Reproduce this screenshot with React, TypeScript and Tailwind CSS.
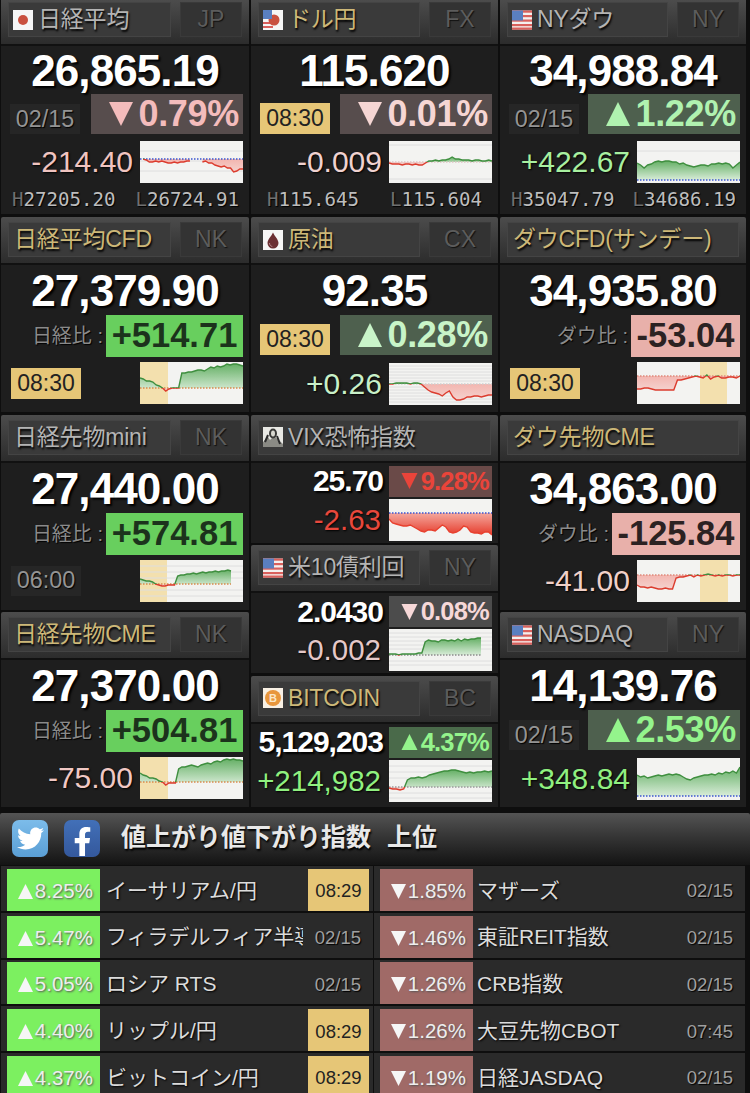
import { useId, type ReactNode } from "react";
import { FaTwitter, FaFacebookF } from "react-icons/fa";

const sans = "font-['Liberation_Sans','Noto_Sans_CJK_JP',sans-serif]";

function Tri({ up, color, w, h }: { up: boolean; color: string; w: number; h: number }) {
  return (
    <svg width={w} height={h} viewBox="0 0 10 10" className="shrink-0">
      <polygon points={up ? "5,0 10,10 0,10" : "0,0 10,0 5,10"} fill={color} />
    </svg>
  );
}

/* flags and small square icons */
function UsFlag() {
  return (
    <svg width="20" height="20" viewBox="0 0 20 20" className="shrink-0">
      <rect y="0.5" width="20" height="19" fill="#f4f0ee" />
      {[0.5, 5, 9.5, 14, 17.5].map((y) => (
        <rect key={y} y={y} width="20" height="2.2" fill="#d9605c" />
      ))}
      <rect y="0.5" width="11" height="10" fill="#5a7fc0" />
    </svg>
  );
}

function JpFlag() {
  return (
    <svg width="20" height="20" viewBox="0 0 20 20" className="shrink-0">
      <rect width="20" height="20" fill="#f6f6f6" />
      <circle cx="10" cy="10" r="5" fill="#c9503f" />
    </svg>
  );
}

function UsdJpy() {
  return (
    <svg width="20" height="20" viewBox="0 0 20 20" className="shrink-0">
      <rect width="20" height="20" fill="#f6f6f6" />
      <rect x="0" y="12" width="10" height="2" fill="#d9605c" />
      <rect x="0" y="16" width="10" height="2" fill="#d9605c" />
      <circle cx="11" cy="10" r="5.5" fill="#c9503f" />
      <rect x="0" y="0" width="9" height="9" fill="#5a7fc0" />
    </svg>
  );
}

function OilIcon() {
  return (
    <svg width="20" height="20" viewBox="0 0 20 20" className="shrink-0">
      <rect width="20" height="20" fill="#f6f6f6" />
      <path d="M10 2.5C8.5 6 4.5 9.5 4.5 13a5.5 5.5 0 0 0 11 0C15.500 9.500 11.500 6 10 2.500Z" fill="#6b2f33" />
      <path d="M6.500 13c0 2 1.200 3.200 2.800 3.500" stroke="#b58a8c" strokeWidth="1" fill="none" />
    </svg>
  );
}

function VixIcon() {
  return (
    <svg width="20" height="20" viewBox="0 0 20 20" className="shrink-0">
      <rect width="20" height="20" fill="#e8e8e4" />
      <path d="M0 20V15L5 10 7 13 11 9 20 17V20Z" fill="#8a8a84" />
      <ellipse cx="10" cy="6.500" rx="4" ry="5" fill="#3a3a38" />
      <ellipse cx="10" cy="6.500" rx="2" ry="3" fill="#d8d8d0" />
      <path d="M5 8L2 15M14 9L17 17" stroke="#2a2a2a" strokeWidth="2" />
    </svg>
  );
}

function BtcIcon() {
  return (
    <svg width="20" height="20" viewBox="0 0 20 20" className="shrink-0">
      <rect width="20" height="20" fill="#f8f0e4" />
      <circle cx="10" cy="10" r="8" fill="#e8963c" />
      <text x="10" y="14" textAnchor="middle" fontSize="11" fontWeight="700" fill="#fbe6c8" fontFamily="Liberation Sans">
        B
      </text>
    </svg>
  );
}

/* header bar above each quote */
function Header({ name, tag, gold, icon, first }: { name: string; tag?: string; gold?: boolean; icon?: ReactNode; first?: boolean }) {
  return (
    <div
      className={`flex gap-[9px] border-b-2 border-[#111] bg-gradient-to-b from-[#4c4c4c] to-[#2c2c2c] px-[7px] ${
        first ? "h-[46px] pt-[2px]" : "h-[48px] rounded-t-[2px] pt-[5px]"
      }`}
    >
      <div className={`flex h-[35px] min-w-0 flex-1 items-center border border-[#444] bg-[#3a3a3a] ${icon ? "pl-[4px]" : "pl-[5px]"}`}>
        {icon && <span className="mr-[5px] flex">{icon}</span>}
        <span
          className={`whitespace-nowrap text-[23px] tracking-[-0.2px] [text-shadow:1px_2px_2px_#000] ${
            gold ? "text-[#cdb878]" : "text-[#b4b4b4]"
          }`}
        >
          {name}
        </span>
      </div>
      {tag && (
        <div className="flex h-[35px] w-[62px] shrink-0 items-center justify-center border border-[#3a3a3a] bg-[#333] text-[23px] text-[#5c5c5c] [text-shadow:1px_1px_1px_#111]">
          {tag}
        </div>
      )}
    </div>
  );
}

function BigValue({ children }: { children: ReactNode }) {
  return (
    <div className="h-[44px] text-center text-[44px] font-bold leading-[44px] tracking-[-0.9px] text-white [text-shadow:2px_2px_2px_#000]">
      {children}
    </div>
  );
}

function PctBox({ up, value, box, text }: { up: boolean; value: string; box: string; text: string }) {
  const fill = text.slice(6, 13);
  return (
    <div className={`flex h-[40px] w-[152px] items-center justify-end gap-[5px] pr-[4px] text-[36px] font-bold tracking-[-0.3px] ${box} ${text}`}>
      <Tri up={up} color={fill} w={24} h={26} />
      {value}
    </div>
  );
}

function SmallPct({ up, value, box, text }: { up: boolean; value: string; box: string; text: string }) {
  const fill = text.slice(6, 13);
  return (
    <div className={`flex h-[31px] w-[103px] items-center justify-end gap-[3px] pr-[3px] text-[25.5px] font-bold tracking-[-0.8px] ${box} ${text}`}>
      <Tri up={up} color={fill} w={17} h={16} />
      {value}
    </div>
  );
}

function DateBox({ children }: { children: ReactNode }) {
  return (
    <div className="flex h-[30px] w-[70px] items-center justify-center bg-[#262626] text-[23.300px] text-[#949494] [text-shadow:1px_1px_1px_#000]">
      {children}
    </div>
  );
}

function TimeBox({ children, className = "" }: { children: ReactNode; className?: string }) {
  return <div className={`flex h-[31px] w-[70px] items-center justify-center bg-[#e6c677] text-[23px] text-[#222] ${className}`}>{children}</div>;
}

function Change({ children, className }: { children: ReactNode; className: string }) {
  return <div className={`mr-[7px] whitespace-nowrap text-[30px] leading-none [text-shadow:1px_1px_2px_#000] ${className}`}>{children}</div>;
}

function DiffRow({ label, value, up, width }: { label: string; value: string; up: boolean; width: string }) {
  return (
    <div className="mt-[2px] flex items-center justify-end gap-[3px] pr-[6px]">
      <span className="text-[20px] text-[#8a8a8a] [text-shadow:1px_1px_1px_#000]">{label} :</span>
      <div
        className={`flex h-[42px] items-center justify-center text-[34.500px] font-bold ${width} ${
          up ? "bg-[#68cf5e] text-[#1c331c]" : "bg-[#e8b0aa] text-[#2c2222]"
        }`}
      >
        {value}
      </div>
    </div>
  );
}

/* tiny intraday chart: the line is green above the base line and red below it */
type SparkProps = {
  ys: (number | null)[];
  base: number;
  baseColor?: string;
  zone?: [number, number];
  end?: number;
  grid?: number[];
  redFill?: [string, string];
  lineRed?: string;
};

function Spark({ ys, base, baseColor = "#3b55d0", zone, end = 103, grid = [10, 20, 30], redFill = ["#f3b4ae", "#f4d2ce"], lineRed = "#dc3c2e" }: SparkProps) {
  const id = useId().replace(/[^a-zA-Z0-9]/g, "");
  const step = end / (ys.length - 1);
  const segs: [number, number][][] = [];
  let cur: [number, number][] = [];
  ys.forEach((y, i) => {
    if (y === null) {
      if (cur.length) segs.push(cur);
      cur = [];
    } else cur.push([i * step, y]);
  });
  if (cur.length) segs.push(cur);
  const line = segs.map((s) => "M" + s.map((p) => p.join(" ")).join("L")).join("");
  const area = segs
    .map((s) => `M${s[0][0]} ${base}L` + s.map((p) => p.join(" ")).join("L") + `L${s[s.length - 1][0]} ${base}Z`)
    .join("");
  return (
    <svg width="103" height="42" viewBox="0 0 103 42" className="block shrink-0">
      <rect width="103" height="42" fill="#f3f3f1" />
      {zone && <rect x={zone[0]} width={zone[1] - zone[0]} height="42" fill="#f3e0ae" />}
      {grid.map((g) => (
        <line key={g} x1="0" x2="103" y1={g} y2={g} stroke="#dedede" strokeWidth="1" />
      ))}
      <defs>
        <clipPath id={id + "a"}>
          <rect width="103" height={base} />
        </clipPath>
        <clipPath id={id + "b"}>
          <rect y={base} width="103" height={42 - base} />
        </clipPath>
        <linearGradient id={id + "g"} x1="0" y1="0" x2="0" y2="1">
          <stop offset="0" stopColor="#66b066" />
          <stop offset="1" stopColor="#d8ecd8" />
        </linearGradient>
        <linearGradient id={id + "r"} x1="0" y1="0" x2="0" y2="1">
          <stop offset="0" stopColor={redFill[0]} />
          <stop offset="1" stopColor={redFill[1]} />
        </linearGradient>
      </defs>
      <path d={area} fill={`url(#${id}g)`} clipPath={`url(#${id}a)`} />
      <path d={area} fill={`url(#${id}r)`} clipPath={`url(#${id}b)`} />
      <line x1="0" x2={end} y1={base} y2={base} stroke={baseColor} strokeWidth="1.500" strokeDasharray="1.500 1.500" />
      <path d={line} fill="none" stroke="#3f8f3f" strokeWidth="1.400" clipPath={`url(#${id}a)`} />
      <path d={line} fill="none" stroke={lineRed} strokeWidth="1.400" clipPath={`url(#${id}b)`} />
    </svg>
  );
}

/* chart series, hand read from the picture */
const nikkei = [null, 18, 19, 21, 21, 20, 21, 20, 21, 22, 22, 21, 22, 21, 21, 20, 20, null, null, null, 21, 20, 22, 22, 24, 25, 26, 25, 27, 27, 31, 30, 28, 28];
const usdjpy = [22, 23, 23, 23, 24, 23, 23, 24, 23, 24, 24, 22, 20, 20, 19, 20, 19, 19, 18, 16, 18, 18, 19, 19, 19, 20, 19, 19, 20, 20, 19, 20];
const nydow = [22, 24, 27, 24, 23, 21, 20, 21, 20, 20, 21, 21, 23, 22, 24, 25, 26, 25, 24, 24, 25, 23, 23, 22, 23, 22, 23, 27, 24, 21];
const cfd = [16, 17, 19, 19, 20, 23, 24, 26, 29, 27, 26, 26, 26, 11, 11, 10, 10, 9, 8, 8, 9, 7, 5, 6, 4, 5, 4, 2, 3, 2, 2, 3, 4];
const oil = [21, 21, 20, 20, 20, 20, 21, 20, 20, 21, 24, 27, 29, 30, 31, 33, 30, 28, 34, 37, 37, 36, 34, 34, 33, 33, 34, 33, 32, 32];
const dowcfd = [27, 27, 26, 26, 27, 28, 28, 28, 28, 28, 28, 18, 18, 17, 16, 15, 14, 15, 16, 13, 17, 15, 14, 16, 16, 15, 15, 16, 14];
const mini = [19, 20, 21, 21, 22, 24, 25, 26, 26, 25, 25, 25, 16, 15, 15, 14, 14, 13, 14, 13, 12, 13, 12, 12, 11, 12, 11, 11, 10, 11];
const dowcme = [25, 27, 27, 28, 27, 28, 29, 29, 28, 29, 29, 18, 17, 17, 16, 15, 17, 15, 16, 15, 14, 15, 16, 15, 16, 15, 15, 16, 15, 15];
const vix = [20, 24, 25, 26, 27, 27, 26, 28, 30, 32, 33, 31, 31, 32, 29, 26, 28, 33, 34, 33, 31, 27, 28, 33, 34, 34, 35, 33, 33, 36];
const tnx = [25, 25, 25, 26, 25, 25, 25, 25, 25, 24, 24, 13, 11, 12, 12, 13, 11, 11, 12, 11, 12, 10, 12, 10, 11, 10, 10, 9, 9];
const btc = [28, 29, 29, 30, 29, 20, 18, 18, 17, 18, 17, 15, 14, 13, 12, 11, 11, 10, 10, 11, 12, 13, 12, 13, 12, 12, 11, 12, 11];
const cme = [16, 18, 19, 21, 21, 22, 24, 25, 28, 26, 26, 26, 12, 10, 10, 9, 8, 9, 10, 8, 7, 6, 7, 5, 4, 5, 3, 2, 3, 2, 3, 3, 4];
const nasdaq = [17, 19, 18, 20, 19, 18, 17, 18, 17, 16, 17, 16, 17, 19, 21, 22, 20, 19, 18, 17, 17, 16, 17, 15, 16, 14, 15, 13, 15, 9];

/* quote body with date and high/low */
function FullBody({ value, left, pct, change, chart, high, low, hlPad = "pl-[11px] pr-[10px]" }: { value: string; left: ReactNode; pct: ReactNode; change: ReactNode; chart: ReactNode; high: string; low: string; hlPad?: string }) {
  return (
    <div className="h-[168px] bg-[#1e1e1e] pt-[3px]">
      <BigValue>{value}</BigValue>
      <div className="mt-[1px] flex items-end justify-between pl-[9px] pr-[6px]">
        {left}
        {pct}
      </div>
      <div className="mt-[7px] flex items-center justify-end pr-[6px]">
        {change}
        {chart}
      </div>
      <div className={`mt-[6px] flex justify-between font-['DejaVu_Sans_Mono',monospace] text-[19.100px] leading-[22px] text-[#bdbdbd] [text-shadow:1px_1px_1px_#000] ${hlPad}`}>
        <span>
          <span className="text-[#707070]">H</span>
          {high}
        </span>
        <span>
          <span className="text-[#707070]">L</span>
          {low}
        </span>
      </div>
    </div>
  );
}

function DiffBody({ value, label, diff, up, width, left, chart }: { value: string; label: string; diff: string; up: boolean; width: string; left: ReactNode; chart: ReactNode }) {
  return (
    <div className="h-[147px] bg-[#1e1e1e] pt-[4px]">
      <BigValue>{value}</BigValue>
      <DiffRow label={label} value={diff} up={up} width={width} />
      <div className="mt-[5px] flex items-center justify-end pl-[10px] pr-[6px]">
        {left}
        {chart}
      </div>
    </div>
  );
}

function PctBody({ value, left, pct, change, chart }: { value: string; left: ReactNode; pct: ReactNode; change: ReactNode; chart: ReactNode }) {
  return (
    <div className="h-[147px] bg-[#1e1e1e] pt-[4px]">
      <BigValue>{value}</BigValue>
      <div className="mt-[2px] flex items-end justify-between pl-[9px] pr-[6px]">
        {left}
        {pct}
      </div>
      <div className="mt-[8px] flex items-center justify-end pr-[6px]">
        {change}
        {chart}
      </div>
    </div>
  );
}

function CompactBody({ value, pct, change, changeClass, chart, tall }: { value: string; pct: ReactNode; change: string; changeClass: string; chart: ReactNode; tall?: boolean }) {
  return (
    <div className={`bg-[#1e1e1e] pr-[6px] pt-[3px] ${tall ? "h-[83px]" : "h-[80px]"}`}>
      <div className="flex items-center justify-end gap-[6px]">
        <span className="text-[30px] font-bold leading-none tracking-[-1px] text-white [text-shadow:2px_2px_2px_#000]">{value}</span>
        {pct}
      </div>
      <div className="mt-[2px] flex items-center justify-end">
        <span className={`mr-[8px] whitespace-nowrap text-[29.500px] leading-none [text-shadow:1px_1px_2px_#000] ${changeClass}`}>{change}</span>
        {chart}
      </div>
    </div>
  );
}

const downBox = "bg-[#574d4d]";
const greenBox = "bg-[#4e604e]";

/* rows of the ranking list */
const rising = [
  { pct: "8.25%", name: "イーサリアム/円", time: "08:29", hot: true },
  { pct: "5.47%", name: "フィラデルフィア半導体", time: "02/15", hot: false },
  { pct: "5.05%", name: "ロシア RTS", time: "02/15", hot: false },
  { pct: "4.40%", name: "リップル/円", time: "08:29", hot: true },
  { pct: "4.37%", name: "ビットコイン/円", time: "08:29", hot: true },
];

const falling = [
  { pct: "1.85%", name: "マザーズ", time: "02/15" },
  { pct: "1.46%", name: "東証REIT指数", time: "02/15" },
  { pct: "1.26%", name: "CRB指数", time: "02/15" },
  { pct: "1.26%", name: "大豆先物CBOT", time: "07:45" },
  { pct: "1.19%", name: "日経JASDAQ", time: "02/15" },
];

function RankRow({ up, pct, name, time, hot }: { up: boolean; pct: string; name: string; time: string; hot?: boolean }) {
  return (
    <div className="flex h-[44.750px] shrink-0 items-end bg-[#2a2a2a] pl-[6px] pr-[4px]">
      <div
        className={`flex h-[42px] w-[93px] shrink-0 items-center justify-end gap-[2px] pr-[7px] pt-[3px] text-[20.500px] text-[#eee] [text-shadow:1px_1px_2px_#555] ${
          up ? "bg-[#7cf060]" : "bg-[#a06a67]"
        }`}
      >
        <Tri up={up} color="#f6f6f6" w={15} h={15} />
        {pct}
      </div>
      <div
        className={`flex h-[42px] min-w-0 flex-1 items-center overflow-hidden whitespace-nowrap pt-[1px] text-[21px] text-[#dcdcdc] [text-shadow:1px_1px_2px_#000] ${
          up ? "ml-[6px]" : "ml-[4px]"
        }`}
      >
        {name}
      </div>
      {hot ? (
        <div className="ml-[5px] flex h-[42px] w-[61px] shrink-0 items-center justify-center bg-[#e6c677] pt-[3px] text-[18.500px] text-[#222]">{time}</div>
      ) : (
        <div className="ml-[5px] flex h-[42px] w-[61px] shrink-0 items-center justify-end pr-[8px] pt-[3px] text-[18.500px] text-[#a0a0a0] [text-shadow:1px_1px_1px_#000]">{time}</div>
      )}
    </div>
  );
}

export default function App() {
  return (
    <div className={`h-[1093px] w-[750px] overflow-hidden bg-[#0e0e0e] ${sans}`}>
      {/* quote panels */}
      <div className="grid h-[807px] grid-cols-[248px_247px_246px] gap-x-[2px] pl-[1px]">
        <div className="flex flex-col gap-[2.500px]">
          <div className="pb-[0.500px]">
            <Header first name="日経平均" tag="JP" icon={<JpFlag />} />
            <FullBody
              value="26,865.19"
              left={<DateBox>02/15</DateBox>}
              pct={<PctBox up={false} value="0.79%" box={downBox} text="text-[#f4bcbc]" />}
              change={<Change className="text-[#f0c4c0]">-214.40</Change>}
              chart={<Spark ys={nikkei} base={18} />}
              high="27205.20"
              low="26724.91"
            />
          </div>
          <div>
            <Header gold name="日経平均CFD" tag="NK" />
            <DiffBody
              value="27,379.90"
              label="日経比"
              diff="+514.71"
              up
              width="w-[137px]"
              left={<TimeBox className="mr-auto">08:30</TimeBox>}
              chart={<Spark ys={cfd} base={26} baseColor="#d88a4c" zone={[0, 28]} grid={[]} />}
            />
          </div>
          <div>
            <Header name="日経先物mini" tag="NK" />
            <DiffBody
              value="27,440.00"
              label="日経比"
              diff="+574.81"
              up
              width="w-[137px]"
              left={
                <div className="mr-auto">
                  <DateBox>06:00</DateBox>
                </div>
              }
              chart={<Spark ys={mini} base={24} baseColor="#d88a4c" zone={[0, 27]} end={91} grid={[6, 12, 18, 30, 36]} />}
            />
          </div>
          <div>
            <Header gold name="日経先物CME" tag="NK" />
            <DiffBody
              value="27,370.00"
              label="日経比"
              diff="+504.81"
              up
              width="w-[137px]"
              left={<Change className="text-[#f0c8c4]">-75.00</Change>}
              chart={<Spark ys={cme} base={25} baseColor="#d88a4c" zone={[0, 28]} grid={[]} />}
            />
          </div>
        </div>

        <div className="flex flex-col gap-[2.500px]">
          <div className="pb-[0.500px]">
            <Header first gold name="ドル円" tag="FX" icon={<UsdJpy />} />
            <FullBody
              value="115.620"
              left={<TimeBox>08:30</TimeBox>}
              pct={<PctBox up={false} value="0.01%" box={downBox} text="text-[#f6d6d4]" />}
              change={<Change className="text-[#f0d2d0]">-0.009</Change>}
              chart={<Spark ys={usdjpy} base={21} baseColor="#e0c4c4" grid={[4, 38]} />}
              high="115.645"
              low="115.604"
              hlPad="pl-[16px] pr-[16px]"
            />
          </div>
          <div>
            <Header gold name="原油" tag="CX" icon={<OilIcon />} />
            <PctBody
              value="92.35"
              left={<TimeBox>08:30</TimeBox>}
              pct={<PctBox up value="0.28%" box={greenBox} text="text-[#c8f4c8]" />}
              change={<Change className="text-[#c8f0c8]">+0.26</Change>}
              chart={<Spark ys={oil} base={21} baseColor="#cfcfcf" grid={[3, 6, 9, 12, 15, 18, 24, 27, 30, 33, 36, 39]} />}
            />
          </div>
          <div>
            <Header name="VIX恐怖指数" icon={<VixIcon />} />
            <CompactBody
              value="25.70"
              pct={<SmallPct up={false} value="9.28%" box="bg-[#6a4a48]" text="text-[#ea443a]" />}
              change="-2.63"
              changeClass="text-[#e8483c]"
              chart={<Spark ys={vix} base={14} redFill={["#f4a89e", "#e63c2c"]} lineRed="#e8402e" grid={[]} />}
            />
          </div>
          <div>
            <Header name="米10債利回" tag="NY" icon={<UsFlag />} />
            <CompactBody
              value="2.0430"
              pct={<SmallPct up={false} value="0.08%" box="bg-[#4c4c4c]" text="text-[#f6d8d8]" />}
              change="-0.002"
              changeClass="text-[#e4c8c8]"
              chart={<Spark ys={tnx} base={26} baseColor="#8c8c8c" end={92} grid={[4, 8, 12, 16, 20, 32, 36]} />}
            />
          </div>
          <div>
            <Header gold name="BITCOIN" tag="BC" icon={<BtcIcon />} />
            <CompactBody
              tall
              value="5,129,203"
              pct={<SmallPct up value="4.37%" box="bg-[#4a6a4a]" text="text-[#94f48c]" />}
              change="+214,982"
              changeClass="text-[#90f080]"
              chart={<Spark ys={btc} base={27} baseColor="#9a9a9a" grid={[6, 12, 18, 33, 38]} />}
            />
          </div>
        </div>

        <div className="flex flex-col gap-[2.500px]">
          <div className="pb-[0.500px]">
            <Header first name="NYダウ" tag="NY" icon={<UsFlag />} />
            <FullBody
              value="34,988.84"
              left={<DateBox>02/15</DateBox>}
              pct={<PctBox up value="1.22%" box={greenBox} text="text-[#b0f2b0]" />}
              change={<Change className="text-[#a8f0a0]">+422.67</Change>}
              chart={<Spark ys={nydow} base={39} grid={[10]} />}
              high="35047.79"
              low="34686.19"
            />
          </div>
          <div>
            <Header gold name="ダウCFD(サンデー)" />
            <DiffBody
              value="34,935.80"
              label="ダウ比"
              diff="-53.04"
              up={false}
              width="w-[109px]"
              left={<TimeBox className="mr-auto">08:30</TimeBox>}
              chart={<Spark ys={dowcfd} base={14} baseColor="#e08a7c" zone={[63, 90]} grid={[]} />}
            />
          </div>
          <div>
            <Header gold name="ダウ先物CME" />
            <DiffBody
              value="34,863.00"
              label="ダウ比"
              diff="-125.84"
              up={false}
              width="w-[128px]"
              left={<Change className="text-[#f0d0c8]">-41.00</Change>}
              chart={<Spark ys={dowcme} base={15} baseColor="#e08a7c" zone={[63, 91]} grid={[]} />}
            />
          </div>
          <div>
            <Header name="NASDAQ" tag="NY" icon={<UsFlag />} />
            <PctBody
              value="14,139.76"
              left={<DateBox>02/15</DateBox>}
              pct={<PctBox up value="2.53%" box={greenBox} text="text-[#94f48c]" />}
              change={<Change className="text-[#90f080]">+348.84</Change>}
              chart={<Spark ys={nasdaq} base={38} grid={[]} />}
            />
          </div>
        </div>
      </div>

      {/* ranking section */}
      <div className="mt-[6px] flex h-[52px] items-center rounded-t-[2px] bg-gradient-to-b from-[#545454] to-[#141414] pb-[2px] pl-[12px]">
        <div className="flex h-[37px] w-[36px] items-center justify-center rounded-[7px] bg-gradient-to-b from-[#7cbcea] to-[#5a9ed4]">
          <FaTwitter className="text-[27px] text-white" />
        </div>
        <div className="ml-[16px] flex h-[37px] w-[36px] items-end justify-center rounded-[7px] bg-gradient-to-b from-[#4270b8] to-[#34589c]">
          <FaFacebookF className="mb-[1px] text-[29px] text-white" />
        </div>
        <span className="ml-[21px] whitespace-pre text-[25px] font-bold text-[#e8e8e8] [text-shadow:1px_2px_2px_#000]">値上がり値下がり指数</span>
        <span className="ml-[16px] text-[25px] font-bold text-[#e8e8e8] [text-shadow:1px_2px_2px_#000]">上位</span>
      </div>
      <div className="mt-[1px] grid grid-cols-[372px_371px] gap-x-[1px] pl-[1px]">
        <div className="flex flex-col gap-[2px]">
          {rising.map((r, i) => (
            <RankRow key={i} up pct={r.pct} name={r.name} time={r.time} hot={r.hot} />
          ))}
        </div>
        <div className="flex flex-col gap-[2px]">
          {falling.map((r, i) => (
            <RankRow key={i} up={false} pct={r.pct} name={r.name} time={r.time} />
          ))}
        </div>
      </div>
    </div>
  );
}
